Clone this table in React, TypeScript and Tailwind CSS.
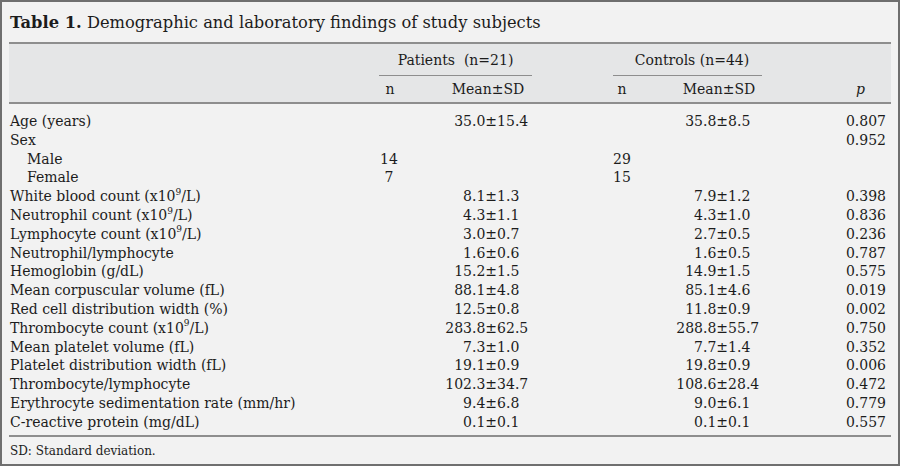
import React from 'react';

type Row = {
    label: React.ReactNode;
    indent?: boolean;
    pn?: string;
    pm?: string;
    cn?: string;
    cm?: string;
    p?: string;
};

const x9 = (name: string) => (
    <>
        {name} (x10<sup className="text-[9px] top-[-0.7em]">9</sup>/L)
    </>
);

const rows: Row[] = [
    { label: 'Age (years)', pm: '35.0±15.4', cm: '35.8±8.5', p: '0.807' },
    { label: 'Sex', p: '0.952' },
    { label: 'Male', indent: true, pn: '14', cn: '29' },
    { label: 'Female', indent: true, pn: '7', cn: '15' },
    { label: x9('White blood count'), pm: '8.1±1.3', cm: '7.9±1.2', p: '0.398' },
    { label: x9('Neutrophil count'), pm: '4.3±1.1', cm: '4.3±1.0', p: '0.836' },
    { label: x9('Lymphocyte count'), pm: '3.0±0.7', cm: '2.7±0.5', p: '0.236' },
    { label: 'Neutrophil/lymphocyte', pm: '1.6±0.6', cm: '1.6±0.5', p: '0.787' },
    { label: 'Hemoglobin (g/dL)', pm: '15.2±1.5', cm: '14.9±1.5', p: '0.575' },
    { label: 'Mean corpuscular volume (fL)', pm: '88.1±4.8', cm: '85.1±4.6', p: '0.019' },
    { label: 'Red cell distribution width (%)', pm: '12.5±0.8', cm: '11.8±0.9', p: '0.002' },
    { label: x9('Thrombocyte count'), pm: '283.8±62.5', cm: '288.8±55.7', p: '0.750' },
    { label: 'Mean platelet volume (fL)', pm: '7.3±1.0', cm: '7.7±1.4', p: '0.352' },
    { label: 'Platelet distribution width (fL)', pm: '19.1±0.9', cm: '19.8±0.9', p: '0.006' },
    { label: 'Thrombocyte/lymphocyte', pm: '102.3±34.7', cm: '108.6±28.4', p: '0.472' },
    { label: 'Erythrocyte sedimentation rate (mm/hr)', pm: '9.4±6.8', cm: '9.0±6.1', p: '0.779' },
    { label: 'C-reactive protein (mg/dL)', pm: '0.1±0.1', cm: '0.1±0.1', p: '0.557' },
];

// decimal aligned on the first point
function Mean({ value, box }: { value?: string; box: string }) {
    if (!value) return <div />;
    const i = value.indexOf('.');
    return (
        <div className="flex whitespace-nowrap">
            <span className={box}>{value.slice(0, i)}</span>
            <span>{value.slice(i)}</span>
        </div>
    );
}

const grid = 'grid grid-cols-[370px_20px_133px_81px_18px_131px_127px]';

export default function App() {
    return (
        <div className="w-[900px] h-[466px] border-2 border-[#6f6f6f] bg-[#f2f2f2] px-[7px] text-[#1c1c1c] font-['DejaVu_Serif',serif] overflow-hidden">
            <div className="h-[40px] pt-[10px] pl-[1px] text-[16.3px] leading-[22px] whitespace-nowrap">
                <span className="font-bold">Table 1.</span> Demographic and laboratory findings of study subjects
            </div>
            <div className="border-t-2 border-b-2 border-[#8e8e8e] bg-[#e5e6e7] text-[14px]">
                <div className={`${grid} h-[32px] items-center`}>
                    <div />
                    <div className="col-span-2 h-full flex items-center justify-center border-b border-[#8e8e8e] whitespace-pre pt-[1px]">
                        Patients  (n=21)
                    </div>
                    <div />
                    <div className="col-span-2 h-full flex items-center justify-center border-b border-[#8e8e8e] pl-[9px] pt-[1px]">
                        Controls (n=44)
                    </div>
                    <div />
                </div>
                <div className={`${grid} h-[26px] items-center`}>
                    <div />
                    <div className="text-center pl-[2px]">n</div>
                    <div className="text-center pl-[45px]">Mean±SD</div>
                    <div />
                    <div className="text-center">n</div>
                    <div className="text-center pl-[45px]">Mean±SD</div>
                    <div className="text-right pr-[24px] italic">p</div>
                </div>
            </div>
            <div className="pt-[8px] pb-[3px] border-b-2 border-[#8e8e8e] text-[14px]">
                {rows.map((r, k) => (
                    <div key={k} className={`${grid} h-[18.8px] leading-[18.8px]`}>
                        <div className={r.indent ? 'pl-[18px] whitespace-nowrap' : 'pl-[1px] whitespace-nowrap'}>{r.label}</div>
                        <div className="text-center">{r.pn}</div>
                        <Mean value={r.pm} box="inline-block w-[73px] text-right" />
                        <div />
                        <div className="text-center">{r.cn}</div>
                        <Mean value={r.cm} box="inline-block w-[72px] text-right" />
                        <div className="text-right pr-[3px]">{r.p}</div>
                    </div>
                ))}
            </div>
            <div className="pt-[6px] pl-[1px] text-[12px] leading-[16px]">SD: Standard deviation.</div>
        </div>
    );
}
